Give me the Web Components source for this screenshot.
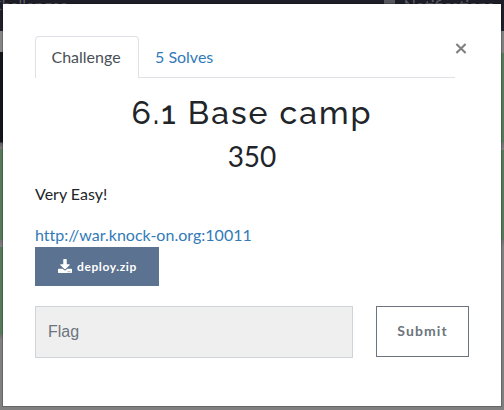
<!DOCTYPE html>
<html lang="en"><head><meta charset="utf-8"><title>Challenge</title>
<style>html,body{margin:0;width:504px;height:410px;overflow:hidden}body{font:16px/24px Lato,sans-serif;color:#212529}</style></head>
<body><challenge-page></challenge-page>
<script>
const define=(name,html)=>customElements.define(name,class extends HTMLElement{
 constructor(){super();this.attachShadow({mode:'open'}).innerHTML=html}
});
define('page-backdrop',`<style>
:host{position:absolute;inset:0;display:flex;flex-direction:column;background:#808080}
nav{height:31px;box-sizing:border-box;background:linear-gradient(#1d1d28,#20202d);color:#5b5c64;display:flex;align-items:flex-start;justify-content:space-between;padding:0 10px 0 0;line-height:24px}
nav span{margin-top:-7px;white-space:nowrap}nav span:first-child{margin-left:-9px}
.r{display:flex;align-items:center;gap:9px}i{width:11px;height:14px;background:#55565d;margin-top:-5px}
.cols{flex:1;display:flex;justify-content:space-between}.cols div{width:8px}
.l{background:linear-gradient(#858585 21px,#12161a 21px 111px,#5e5e5e 112px,#7d7d7d 118px,#557a5b 118px 209px,#737373 209px,#808080 216px,#557a5b 216px 303px,#707070 304px,#808080 309px)}
.g{background:linear-gradient(#808080 22px,#557a5b 22px 111px,#707070 112px,#808080 119px,#557a5b 119px 208px,#707070 209px,#808080 216px)}
</style><nav><span>Challenges</span><span class="r"><i></i>Notifications</span></nav><div class="cols"><div class="l"></div><div class="g"></div></div>`);
define('tab-item',`<style>:host{display:block;box-sizing:border-box;height:42px;padding:8px 16px;border:1px solid transparent;border-bottom:0;color:#337ab7}
:host([active]){width:104px;padding:8px 0 8px 15.500px;color:#495057;background:#fff;border-color:#dee2e6;border-radius:4px 4px 0 0}:host(:not([active])){padding-left:15px}</style><slot></slot>`);
define('tab-bar',`<style>:host{display:flex;box-sizing:border-box;width:420px;height:42px;background:linear-gradient(#dee2e6,#dee2e6) bottom/100% 1px no-repeat}</style><slot></slot>`);
define('close-button',`<style>:host{display:block;width:12px;height:12px;margin:6px 2px 0 0}svg{display:block}</style><svg width="12" height="12" viewBox="0 0 12 12"><path d="M1.400 1.900 10.600 11.100M10.600 1.900 1.400 11.100" stroke="#7f7f7f" stroke-width="2.100"/></svg>`);
define('file-button',`<style>:host{display:flex;align-items:center;box-sizing:border-box;width:124px;height:39px;padding-left:23px;gap:5px;background:#5b7290;color:#fff;font-size:12px;font-weight:700;letter-spacing:.6px}svg{flex:none;margin-top:-2px}</style>
<svg width="14" height="14" viewBox="0 0 512 512"><path fill="#fff" d="M216 0h80c13.300 0 24 10.700 24 24v168h87.700c17.800 0 26.700 21.500 14.100 34.100L269.700 378.300c-7.500 7.500-19.800 7.500-27.300 0L90.100 226.100c-12.600-12.600-3.700-34.100 14.100-34.100H192V24c0-13.300 10.700-24 24-24zm296 376v112c0 13.300-10.700 24-24 24H24c-13.300 0-24-10.700-24-24V376c0-13.300 10.700-24 24-24h146.700l49 49c20.100 20.100 52.500 20.100 72.600 0l49-49H488c13.300 0 24 10.700 24 24zm-124 88c0-11-9-20-20-20s-20 9-20 20 9 20 20 20 20-9 20-20zm64 0c0-11-9-20-20-20s-20 9-20 20 9 20 20 20 20-9 20-20z"/></svg><slot></slot>`);
define('flag-form',`<style>:host{display:flex;justify-content:space-between;margin-top:20px}
input{box-sizing:border-box;width:318px;height:52px;border:1px solid #ced4da;border-radius:0;background:#efefef;padding:0 12px;font:16px "Liberation Sans",sans-serif;outline:0}input::placeholder{color:#6c757d;opacity:1}
button{box-sizing:border-box;width:93px;height:51px;border:1px solid #6c757d;background:#fff;padding:0 0 2px;color:#6c757d;font:700 14px Lato,sans-serif;letter-spacing:1.100px}</style><input placeholder="Flag"><button>Submit</button>`);
define('modal-dialog',`<style>:host{position:absolute;left:2px;top:3px;display:block;box-sizing:border-box;width:500px;height:404px;border:1px solid rgba(0,0,0,.2);background:#fff;background-clip:padding-box;padding:32px}
header{display:flex;justify-content:space-between}
h2{margin:15px 0 0;font:500 32px/39px Raleway,Lato,sans-serif;text-align:center;letter-spacing:2px;white-space:nowrap}
h3{margin:7px 0 0;font:400 28px/34px Lato,sans-serif;text-align:center}
p{margin:9px 0 0}a{display:block;margin-top:17px;color:#337ab7;text-decoration:none;letter-spacing:.02px}
</style><header><tab-bar><tab-item active>Challenge</tab-item><tab-item>5 Solves</tab-item></tab-bar><close-button></close-button></header>
<h2>6.1 Base camp</h2><h3>350</h3><p>Very Easy!</p><a href="#">http://war.knock-on.org:10011</a><file-button>deploy.zip</file-button><flag-form></flag-form>`);
define('challenge-page',`<style>:host{display:block;position:relative;width:504px;height:410px;overflow:hidden}</style><page-backdrop></page-backdrop><modal-dialog></modal-dialog>`);
</script></body></html>
